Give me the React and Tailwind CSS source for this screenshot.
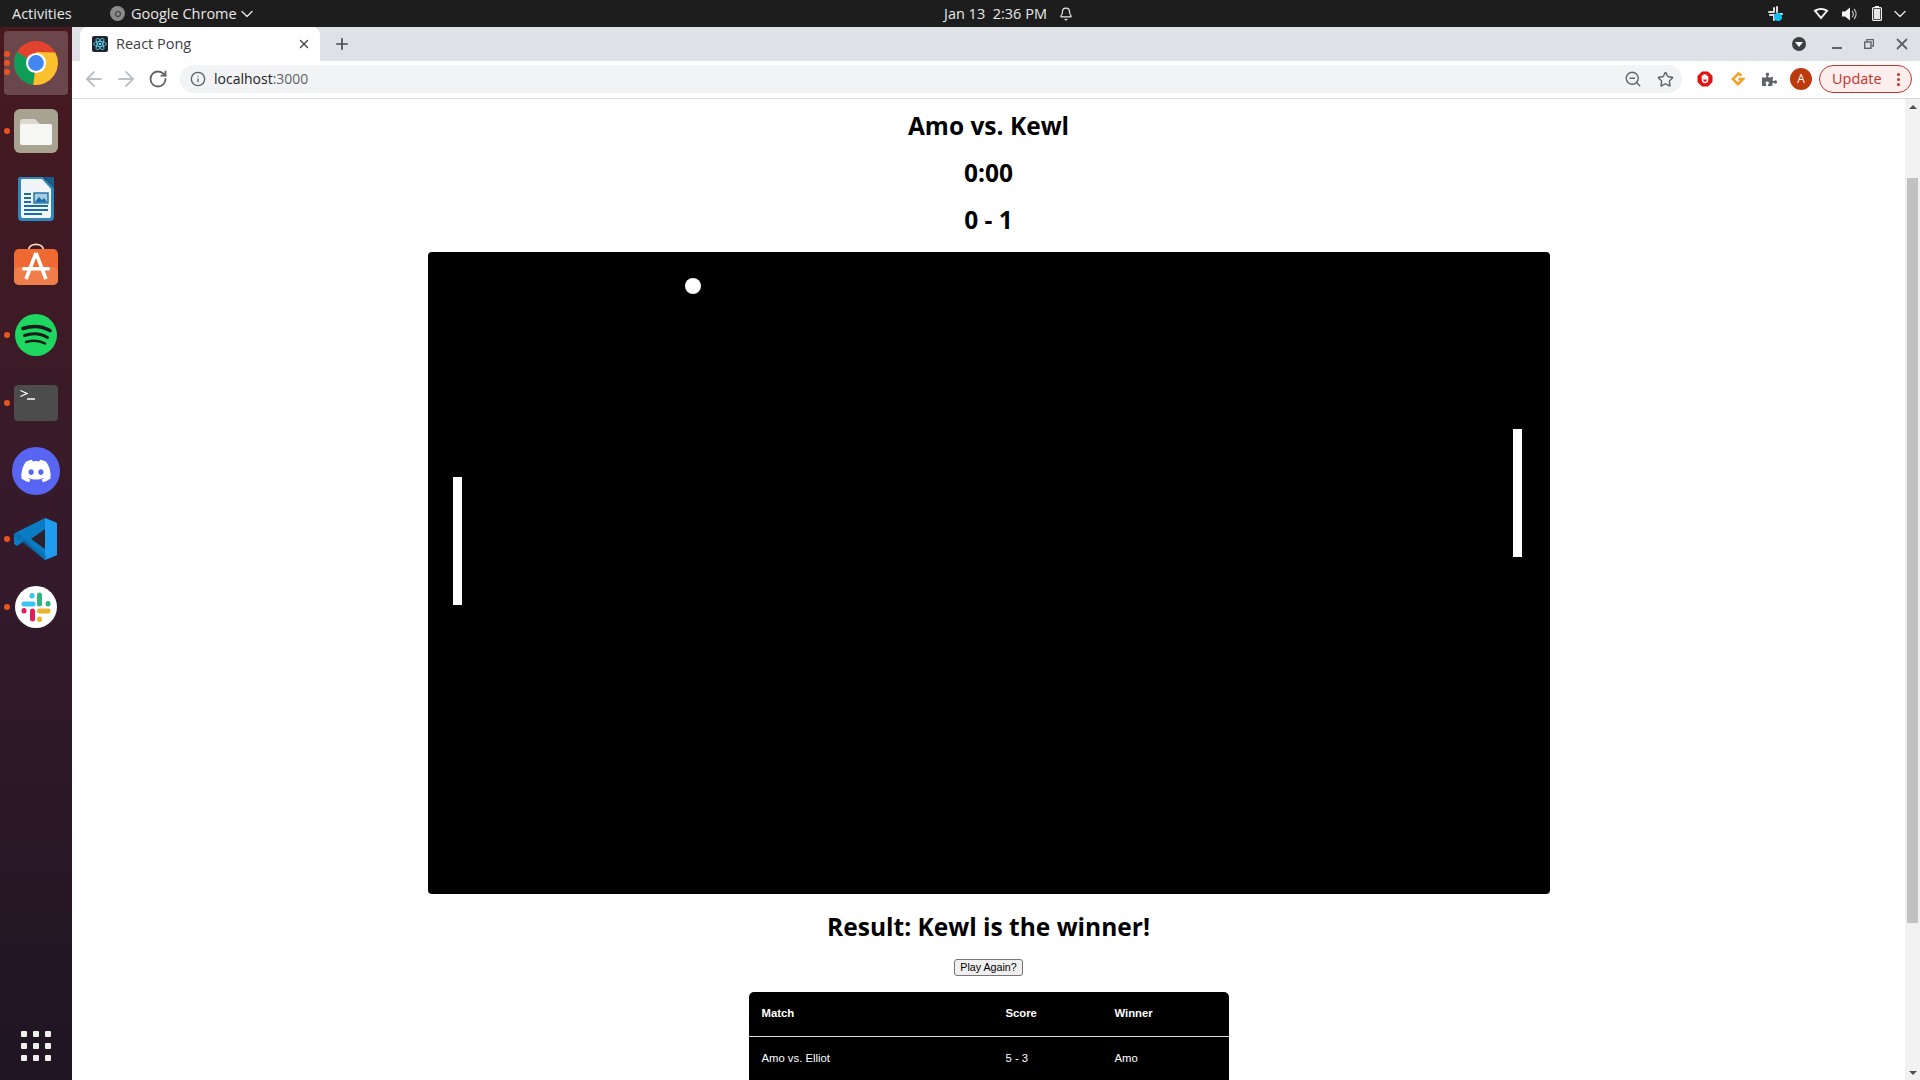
import React from 'react';
import { ArrowLeft, ArrowRight, RotateCw, Info, Star, ZoomOut, X, Plus, ChevronDown, Bell } from 'lucide-react';
import { FaDiscord, FaPuzzlePiece } from 'react-icons/fa';

const ChromeLogo = () => (
  <svg width="44" height="44" viewBox="0 0 48 48">
    <circle cx="24" cy="24" r="24" fill="#e2432f" />
    <path d="M24 24 L3.2 12 A24 24 0 0 0 21 47.8 Z" fill="#0f9d58" />
    <path d="M24 24 L21 47.8 A24 24 0 0 0 45 12.5 L24 12 Z" fill="#fbc02d" />
    <circle cx="24" cy="24" r="11" fill="#fff" />
    <circle cx="24" cy="24" r="8.6" fill="#4285f4" />
  </svg>
);

const FilesIcon = () => (
  <svg width="44" height="44" viewBox="0 0 44 44">
    <rect width="44" height="44" rx="6" fill="#a8a290" />
    <path d="M6 13 a3 3 0 0 1 3-3 h12 l5 5 h9 a3 3 0 0 1 3 3 v15 a3 3 0 0 1-3 3 H9 a3 3 0 0 1-3-3Z" fill="#dcd9d0" />
    <path d="M6 17 a2 2 0 0 1 2-2 h28 a2 2 0 0 1 2 2 v17 a2 2 0 0 1-2 2 H8 a2 2 0 0 1-2-2Z" fill="#f6f6f4" />
  </svg>
);

const WriterIcon = () => (
  <svg width="38" height="46" viewBox="0 0 38 46">
    <path d="M3 1 H26 L37 12 V41 a4 4 0 0 1-4 4 H5 a4 4 0 0 1-4-4 V3 a2 2 0 0 1 2-2Z" fill="#2f86b8" />
    <path d="M5 3 H25 L34 13 V40 a2 2 0 0 1-2 2 H6 a2 2 0 0 1-2-2 V4Z" fill="#f2f5f7" />
    <path d="M27 1 L37 1 V12Z" fill="#1a5f8c" />
    <rect x="17" y="17" width="14" height="10" fill="#a5cde4" stroke="#1a6ea3" strokeWidth="1.4" />
    <path d="M18 26 l4-5 3 3 2-2 3 4Z" fill="#1a6ea3" />
    <path d="M7 18h7M7 22h7M7 26h7M7 30h24M7 34h24M7 38h18" stroke="#1a6ea3" strokeWidth="1.8" />
  </svg>
);

const StoreIcon = () => (
  <svg width="44" height="42" viewBox="0 0 44 42" className="-mt-[6px]">
    <path d="M14.5 7 C15 -0.5 29 -0.5 29.5 7" fill="none" stroke="#f7d9bd" strokeWidth="1.8" />
    <rect y="6" width="44" height="36" rx="5" fill="#ee6a32" />
    <rect y="24" width="44" height="18" rx="5" fill="#f07e4b" />
    <path d="M22 10 L12 36 M22 10 L32 36" stroke="#fff" strokeWidth="3.6" />
    <rect x="8" y="24" width="28" height="3.6" rx="1.5" fill="#fff" />
  </svg>
);

const SpotifyIcon = () => (
  <svg width="42" height="42" viewBox="0 0 42 42">
    <circle cx="21" cy="21" r="21" fill="#1ed760" />
    <g fill="none" stroke="#1c1c1c" strokeLinecap="round">
      <path d="M8 14.5 C17 11.5 27 12 35 16.5" strokeWidth="3.6" />
      <path d="M9.5 21.5 C17 19 26 19.5 32.5 23.5" strokeWidth="3" />
      <path d="M11 28 C17.5 26 25 26.5 30 29.5" strokeWidth="2.5" />
    </g>
  </svg>
);

const TerminalIcon = () => (
  <svg width="44" height="36" viewBox="0 0 44 36">
    <rect width="44" height="36" rx="4" fill="#4c4c4c" />
    <path d="M6.5 5.5 L13 8.5 L6.5 11.5" fill="none" stroke="#fff" strokeWidth="1.3" />
    <path d="M13 14 H21" stroke="#fff" strokeWidth="1.5" />
  </svg>
);

const VsCodeIcon = () => (
  <svg width="44" height="44" viewBox="0 0 44 44">
    <path d="M31 1 L43 6 V38 L31 43 L10 24 L3 29 L0 27 V17 L3 15 Z" fill="#0a7cc4" />
    <path d="M31 1 L43 6 V38 L31 43Z" fill="#1f9cf0" />
    <path d="M31 12 V32 L17 22Z" fill="#2f2030" />
    <path d="M3 15 L0 17 L1 20 L31 43 L33 40 Z" fill="#0b6aab" opacity="0.6" />
  </svg>
);

const SlackIcon = () => (
  <svg width="42" height="42" viewBox="0 0 42 42">
    <circle cx="21" cy="21" r="21" fill="#fff" />
    <g fill="none" strokeWidth="5" strokeLinecap="round">
      <path d="M9 18 H18" stroke="#36c5f0" />
      <path d="M17 9.5 V10" stroke="#36c5f0" />
      <path d="M24.5 9 V18" stroke="#2eb67d" />
      <path d="M33 17.5 V18" stroke="#2eb67d" />
      <path d="M24.5 25 H33" stroke="#ecb22e" />
      <path d="M24.5 33 V33.5" stroke="#ecb22e" />
      <path d="M17.5 25 V33" stroke="#e01e5a" />
      <path d="M9 24.5 V25" stroke="#e01e5a" />
    </g>
  </svg>
);

const dockItems = [
  { key: 'chrome', icon: <ChromeLogo />, dots: 3, active: true },
  { key: 'files', icon: <FilesIcon />, dots: 1 },
  { key: 'writer', icon: <WriterIcon />, dots: 0 },
  { key: 'store', icon: <StoreIcon />, dots: 0 },
  { key: 'spotify', icon: <SpotifyIcon />, dots: 1 },
  { key: 'terminal', icon: <TerminalIcon />, dots: 1 },
  {
    key: 'discord',
    icon: (
      <div className="w-12 h-12 rounded-full bg-[#5865f2] flex items-center justify-center text-white">
        <FaDiscord size={32} />
      </div>
    ),
    dots: 0,
  },
  { key: 'vscode', icon: <VsCodeIcon />, dots: 1 },
  { key: 'slack', icon: <SlackIcon />, dots: 1 },
];

const Dock = () => (
  <aside className="w-[72px] shrink-0 flex flex-col items-center pt-[2px] pb-[19px] bg-gradient-to-b from-[#47191f] via-[#351a2b] to-[#1f1522]">
    {dockItems.map((item) => (
      <div key={item.key} className="relative w-[72px] h-[68px] flex items-center justify-center">
        {item.active && <div className="absolute left-[4px] top-[2px] w-[64px] h-[64px] rounded-[4px] bg-white/20" />}
        <div className="relative flex items-center justify-center">{item.icon}</div>
        {item.dots > 0 && (
          <div className="absolute left-[4px] top-0 h-full flex flex-col justify-center gap-[3px]">
            {Array.from({ length: item.dots }).map((_, i) => (
              <span key={i} className="w-[6px] h-[6px] rounded-full bg-[#e9541f]" />
            ))}
          </div>
        )}
      </div>
    ))}
    <div className="mt-auto grid grid-cols-3 gap-[6px]">
      {Array.from({ length: 9 }).map((_, i) => (
        <span key={i} className="w-[6px] h-[6px] rounded-[1px] bg-[#eeeeec]" />
      ))}
    </div>
  </aside>
);

const TopBar = () => (
  <header className="h-[27px] shrink-0 bg-[#1d1d1d] text-[#e8e8e8] flex items-center text-[14.5px] font-['Open_Sans',sans-serif] relative">
    <span className="ml-[12px] w-[98px]">Activities</span>
    <span className="w-[15px] h-[15px] rounded-full bg-[#8a8a8a] flex items-center justify-center">
      <span className="w-[6px] h-[6px] rounded-full border border-[#333]" />
    </span>
    <span className="ml-[6px]">Google Chrome</span>
    <ChevronDown size={20} strokeWidth={1.5} />
    <div className="absolute left-[944px] top-0 h-full flex items-center">
      <span className="w-[106px] whitespace-nowrap">Jan 13&nbsp; 2:36 PM</span>
      <Bell size={14} className="ml-[9px]" />
    </div>
    <div className="ml-auto flex items-center pr-[10px]">
      <svg width="15" height="15" viewBox="0 0 15 15" className="mr-[30px]">
        <path d="M1 6h5M6 2v3M9 1v5M9 8h5" stroke="#ddd" strokeWidth="2" strokeLinecap="round" />
        <path d="M2 9h4M6 10v4" stroke="#ddd" strokeWidth="2" strokeLinecap="round" />
        <circle cx="10" cy="11" r="4" fill="#12bdf2" />
      </svg>
      <svg width="16" height="13" viewBox="0 0 16 13" className="mr-[13px]">
        <path d="M0.5 3.5 C4.5 0 11.5 0 15.5 3.5 L8 12.5Z" fill="#f2f2f2" />
        <path d="M3.5 4.3 C6 2.6 10 2.6 12.5 4.3 L8 9.5Z" fill="#1d1d1d" />
      </svg>
      <svg width="15" height="14" viewBox="0 0 15 14" className="mr-[15px]">
        <path d="M0 4.5h3L8 0.5v13L3 9.5H0Z" fill="#f2f2f2" />
        <path d="M10 4 a4 4 0 0 1 0 6M12 2 a7 7 0 0 1 0 10" fill="none" stroke="#bbb" strokeWidth="1.2" />
      </svg>
      <svg width="10" height="15" viewBox="0 0 10 15" className="mr-[8px]">
        <rect x="3" y="0" width="4" height="2" fill="#f2f2f2" />
        <rect x="0.6" y="1.6" width="8.8" height="12.8" rx="1" fill="#1d1d1d" stroke="#f2f2f2" strokeWidth="1.2" />
        <rect x="2" y="3" width="6" height="10" fill="#e8e8e8" />
      </svg>
      <ChevronDown size={20} strokeWidth={1.5} />
    </div>
  </header>
);

const TabStrip = () => (
  <div className="h-[34px] shrink-0 bg-[#dee1e6] flex items-stretch pl-[8px] pr-[9px] text-[#3c4043]">
    <div className="w-[240px] bg-white rounded-t-[8px] flex items-center pl-[12px] pr-[9px] text-[14.5px] font-['Open_Sans',sans-serif]">
      <svg width="16" height="16" viewBox="0 0 16 16">
        <rect width="16" height="16" rx="2" fill="#20232a" />
        <g fill="none" stroke="#61dafb" strokeWidth="0.8">
          <ellipse cx="8" cy="8" rx="6.4" ry="2.5" />
          <ellipse cx="8" cy="8" rx="6.4" ry="2.5" transform="rotate(60 8 8)" />
          <ellipse cx="8" cy="8" rx="6.4" ry="2.5" transform="rotate(120 8 8)" />
        </g>
        <circle cx="8" cy="8" r="1.3" fill="#61dafb" />
      </svg>
      <span className="ml-[8px] -mt-[1px]">React Pong</span>
      <X size={14} strokeWidth={2.5} className="ml-auto text-[#45484c]" />
    </div>
    <div className="w-[44px] flex items-center justify-center">
      <Plus size={18} strokeWidth={2.2} className="text-[#45484c]" />
    </div>
    <div className="ml-auto flex items-center text-[#5f6368]">
      <span className="w-[14px] h-[14px] rounded-full bg-[#3c4043] flex items-center justify-center">
        <span className="w-0 h-0 border-x-[4px] border-x-transparent border-t-[5px] border-t-white mt-[1px]" />
      </span>
      <span className="ml-[26px] w-[10px] h-[2px] bg-[#5f6368] mt-[8px]" />
      <svg width="10" height="10" viewBox="0 0 10 10" className="ml-[22px]">
        <path d="M3 2.5V0.5H9.5V7H7.5" fill="none" stroke="#5f6368" strokeWidth="1.4" />
        <rect x="0.7" y="3" width="6.3" height="6.3" fill="none" stroke="#5f6368" strokeWidth="1.4" />
      </svg>
      <X size={18} strokeWidth={2.4} className="ml-[19px]" />
    </div>
  </div>
);

const Toolbar = () => (
  <div className="h-[38px] shrink-0 bg-white border-b border-[#d8dadd] flex items-center pl-[10px] pb-[1px] text-[#5f6368]">
    <ArrowLeft size={24} strokeWidth={1.8} className="text-[#bcc0c4]" />
    <ArrowRight size={24} strokeWidth={1.8} className="text-[#bcc0c4] ml-[8px]" />
    <RotateCw size={20} strokeWidth={2.2} className="ml-[10px]" />
    <div className="ml-[12px] h-[28px] w-[1502px] rounded-full bg-[#f1f3f4] flex items-center pl-[10px] pr-[8px] text-[14px] font-['Open_Sans',sans-serif]">
      <Info size={16} strokeWidth={2} />
      <span className="ml-[8px] -mt-[1px] text-[#202124]">localhost</span>
      <span className="-mt-[1px] text-[#5f6368]">:3000</span>
      <ZoomOut size={18} strokeWidth={1.8} className="ml-auto" />
      <Star size={17} strokeWidth={2} className="ml-[15px]" />
    </div>
    <svg width="16" height="16" viewBox="0 0 16 16" className="ml-[15px]">
      <path d="M5 0.5h6L15.5 5v6L11 15.5H5L0.5 11V5Z" fill="#e31010" />
      <path d="M5.5 9V5M7.2 8V3.8M8.9 8V4M10.5 9V5.5M5.5 9c0 3 5 3.5 5 0" stroke="#fff" strokeWidth="1.6" fill="none" strokeLinecap="round" />
    </svg>
    <svg width="14" height="14" viewBox="0 0 14 14" className="ml-[18px]">
      <path d="M10.5 3.5 L7.5 1.5 L1.8 7 L7 12.2 L12.2 7 H7.5" fill="none" stroke="#f6a02a" strokeWidth="2.6" />
    </svg>
    <FaPuzzlePiece size={15} className="ml-[17px]" />
    <span className="ml-[13px] w-[22px] h-[22px] rounded-full bg-[#bb3a0e] text-white text-[12px] flex items-center justify-center font-['Open_Sans',sans-serif]">
      A
    </span>
    <div className="ml-[7px] w-[93px] h-[28px] rounded-full border border-[#c5332a] bg-[#fdeeee] text-[#c5332a] text-[14.5px] flex items-center pl-[12px] font-['Open_Sans',sans-serif]">
      <span className="-mt-[1px]">Update</span>
      <span className="ml-[15px] flex flex-col gap-[2px]">
        <span className="w-[3px] h-[3px] rounded-full bg-[#c5332a]" />
        <span className="w-[3px] h-[3px] rounded-full bg-[#c5332a]" />
        <span className="w-[3px] h-[3px] rounded-full bg-[#c5332a]" />
      </span>
    </div>
  </div>
);

const Scrollbar = () => (
  <div className="w-[15px] shrink-0 bg-[#f1f1f1] flex flex-col items-center pt-[6px] pb-[5px]">
    <span className="w-0 h-0 border-x-[4px] border-x-transparent border-b-[4px] border-b-[#505050]" />
    <div className="w-[11px] h-[745px] bg-[#c1c1c1] mt-[69px]" />
    <span className="w-0 h-0 border-x-[4px] border-x-transparent border-t-[4px] border-t-[#505050] mt-auto" />
  </div>
);

const matches = [{ match: 'Amo vs. Elliot', score: '5 - 3', winner: 'Amo' }];

const PongPage = () => (
  <main className="flex-1 min-w-0 overflow-hidden flex flex-col items-center bg-white text-black font-['Open_Sans',sans-serif]">
    <h2 className="text-[24.5px] font-bold leading-[28px] mt-[13px]">Amo vs. Kewl</h2>
    <h2 className="text-[24.5px] font-bold leading-[28px] mt-[19px]">0:00</h2>
    <h2 className="text-[24.5px] font-bold leading-[28px] mt-[19px]">0 - 1</h2>
    <div className="relative w-[1122px] h-[642px] shrink-0 bg-black rounded-[4px] mt-[18px]">
      <div className="absolute left-[257.5px] top-[26px] w-[16px] h-[16px] rounded-full bg-white" />
      <div className="absolute left-[25.5px] top-[225px] w-[8.7px] h-[128px] bg-white" />
      <div className="absolute left-[1085.5px] top-[177px] w-[8.7px] h-[128px] bg-white" />
    </div>
    <h2 className="text-[24.5px] font-bold leading-[33px] mt-[16px]">Result: Kewl is the winner!</h2>
    <button className="mt-[16px] h-[17px] w-[69px] rounded-[3px] border border-[#767676] bg-[#efefef] text-[10.67px] leading-none font-['Liberation_Sans',sans-serif]">
      Play Again?
    </button>
    <table className="w-[480px] mt-[16px] shrink-0 bg-black text-white text-[11.3px] text-left font-['Liberation_Sans',sans-serif] rounded-t-[5px] border-separate border-spacing-0">
      <thead>
        <tr className="h-[45px]">
          <th className="w-[244px] pl-[13px] pb-[2px] font-bold border-b border-[#dddddd]">Match</th>
          <th className="w-[109px] pl-[13px] pb-[2px] font-bold border-b border-[#dddddd]">Score</th>
          <th className="pl-[13px] pb-[2px] font-bold border-b border-[#dddddd]">Winner</th>
        </tr>
      </thead>
      <tbody>
        {matches.map((row) => (
          <tr key={row.match} className="h-[43px]">
            <td className="pl-[13px]">{row.match}</td>
            <td className="pl-[13px]">{row.score}</td>
            <td className="pl-[13px]">{row.winner}</td>
          </tr>
        ))}
      </tbody>
    </table>
  </main>
);

export default function App() {
  return (
    <div className="w-[1920px] h-[1080px] overflow-hidden flex flex-col">
      <TopBar />
      <div className="flex-1 min-h-0 flex">
        <Dock />
        <div className="flex-1 min-w-0 flex flex-col">
          <TabStrip />
          <Toolbar />
          <div className="flex-1 min-h-0 flex">
            <PongPage />
            <Scrollbar />
          </div>
        </div>
      </div>
    </div>
  );
}
